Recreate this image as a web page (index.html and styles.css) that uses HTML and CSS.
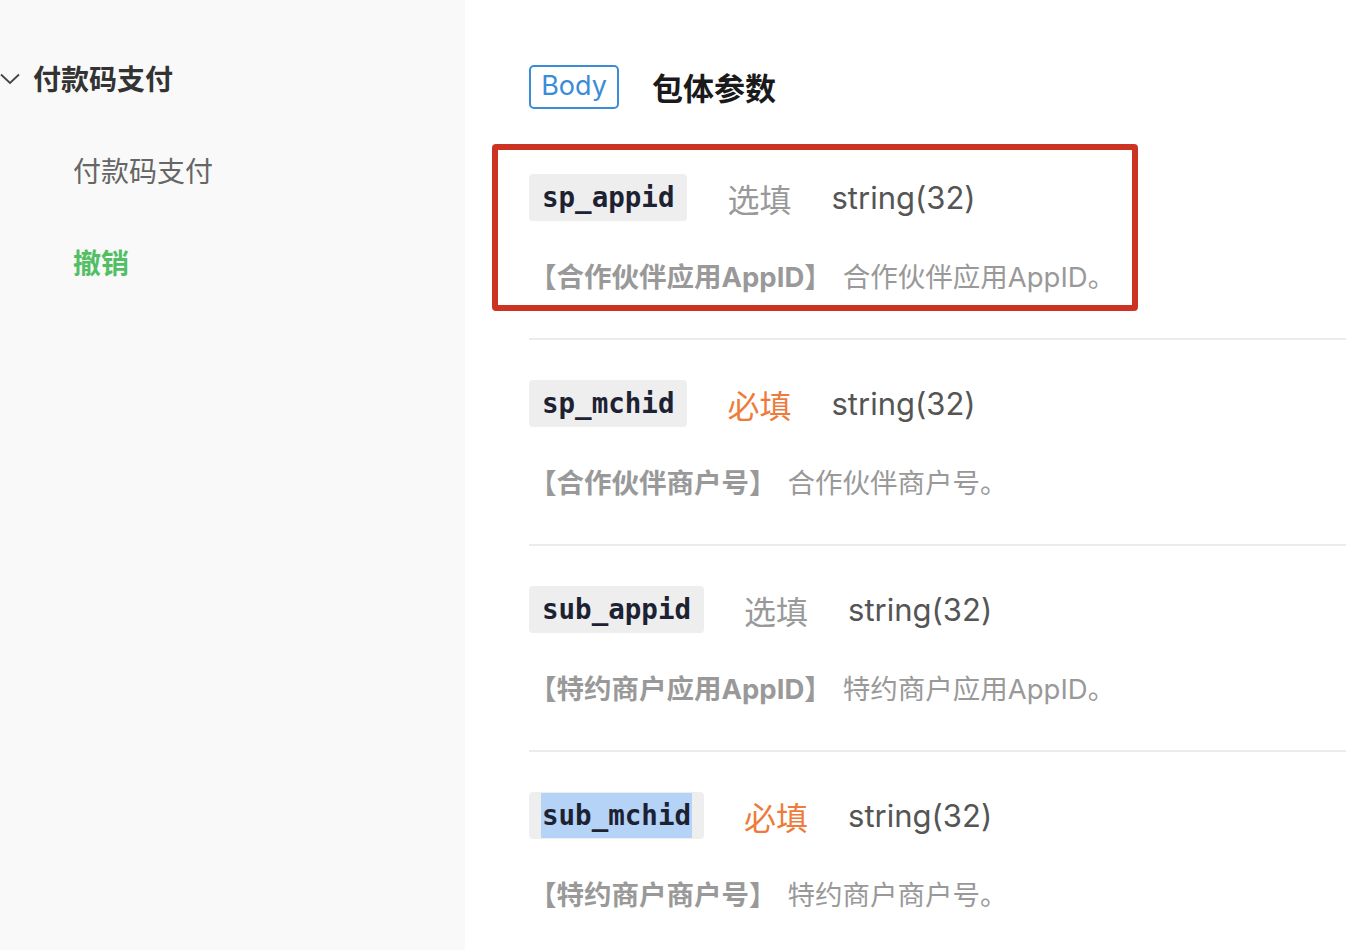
FILE: index.html
```html
<!DOCTYPE html>
<html lang="zh-CN">
<head>
<meta charset="utf-8">
<title>包体参数</title>
<link rel="stylesheet" href="styles.css">
</head>
<body>
<div class="page">
  <aside class="sidebar">
    <div class="group-title">
      <svg class="chevron" width="20" height="12" viewBox="0 0 20 12"><path d="M1 1.5 L10 10 L19 1.5" fill="none" stroke="#444" stroke-width="1.8"/></svg>
      <span>付款码支付</span>
    </div>
    <div class="nav-item">付款码支付</div>
    <div class="nav-item active">撤销</div>
  </aside>
  <main class="content">
    <div class="section-head">
      <span class="badge">Body</span>
      <h2 class="section-title">包体参数</h2>
    </div>
    <div class="params">
      <div class="param">
        <div class="param-line">
          <code class="pname">sp_appid</code>
          <span class="req optional">选填</span>
          <span class="ptype">string(32)</span>
        </div>
        <div class="pdesc"><b>【合作伙伴应用AppID】</b>合作伙伴应用AppID。</div>
        <div class="highlight-box"></div>
      </div>
      <div class="param">
        <div class="param-line">
          <code class="pname">sp_mchid</code>
          <span class="req required">必填</span>
          <span class="ptype">string(32)</span>
        </div>
        <div class="pdesc"><b>【合作伙伴商户号】</b>合作伙伴商户号。</div>
      </div>
      <div class="param">
        <div class="param-line">
          <code class="pname">sub_appid</code>
          <span class="req optional">选填</span>
          <span class="ptype">string(32)</span>
        </div>
        <div class="pdesc"><b>【特约商户应用AppID】</b>特约商户应用AppID。</div>
      </div>
      <div class="param">
        <div class="param-line">
          <code class="pname"><span class="selected">sub_mchid</span></code>
          <span class="req required">必填</span>
          <span class="ptype">string(32)</span>
        </div>
        <div class="pdesc"><b>【特约商户商户号】</b>特约商户商户号。</div>
      </div>
    </div>
  </main>
</div>
</body>
</html>
```
FILE: styles.css
```css
html, body {
  margin: 0;
  padding: 0;
  height: 100%;
  overflow: hidden;
  background: #fff;
}
body {
  font-family: "Inter", "Noto Sans CJK SC", sans-serif;
}
.page {
  display: flex;
  height: 950px;
}
.sidebar {
  width: 465px;
  flex: none;
  background: #f9f9f9;
  padding-top: 57px;
  box-sizing: border-box;
}
.group-title {
  display: flex;
  align-items: center;
  gap: 13px;
  height: 42px;
  font-family: "Noto Sans CJK SC", sans-serif;
  font-size: 28px;
  font-weight: 700;
  color: #333;
}
.chevron {
  flex: none;
  margin-top: 2px;
}
.nav-item {
  padding-left: 73px;
  margin-top: 50px;
  height: 42px;
  line-height: 42px;
  font-family: "Noto Sans CJK SC", sans-serif;
  font-size: 28px;
  color: #666;
}
.nav-item.active {
  color: #52bf64;
  font-weight: 700;
}
.content {
  flex: 1;
  padding: 65px 0 0 64px;
  box-sizing: border-box;
}
.section-head {
  display: flex;
  align-items: center;
  gap: 33px;
}
.badge {
  box-sizing: border-box;
  height: 44px;
  width: 90px;
  border: 2px solid #3b8cd6;
  border-radius: 5px;
  color: #3b8cd6;
  font-size: 27px;
  line-height: 38px;
  text-align: center;
}
.section-title {
  margin: 0;
  font-family: "Noto Sans CJK SC", sans-serif;
  font-size: 31px;
  font-weight: 700;
  color: #1a1a1a;
  line-height: 44px;
}
.params {
  margin-top: 25px;
}
.param {
  position: relative;
  padding: 40px 0 41px;
  border-bottom: 2px solid #e9ebef;
}
.param:last-child {
  border-bottom: none;
}
.param-line {
  display: flex;
  align-items: center;
  height: 47px;
}
.pname {
  box-sizing: border-box;
  height: 47px;
  padding: 0 13px;
  background: #eeeeee;
  border-radius: 4px;
  font-family: "DejaVu Sans Mono", monospace;
  font-weight: 700;
  font-size: 27.5px;
  line-height: 47px;
  color: #1d2233;
}
.selected {
  background: #b4d3f7;
  padding: 6px 1px 7px;
  margin: 0 -1px;
}
.req {
  margin-left: 40px;
  font-family: "Noto Sans CJK SC", sans-serif;
  font-size: 32px;
}
.optional {
  color: #999;
}
.required {
  color: #ee7b3c;
}
.ptype {
  margin-left: 40px;
  font-size: 31px;
  color: #555;
}
.pdesc {
  margin-top: 36px;
  height: 40px;
  line-height: 40px;
  font-size: 27.5px;
  color: #999;
  white-space: nowrap;
}
.pdesc b {
  font-weight: 700;
  margin-right: 11px;
}
.highlight-box {
  position: absolute;
  left: -37px;
  top: 10px;
  width: 646px;
  height: 167px;
  box-sizing: border-box;
  border: 6px solid #cc3322;
  border-radius: 4px;
  pointer-events: none;
}
```
